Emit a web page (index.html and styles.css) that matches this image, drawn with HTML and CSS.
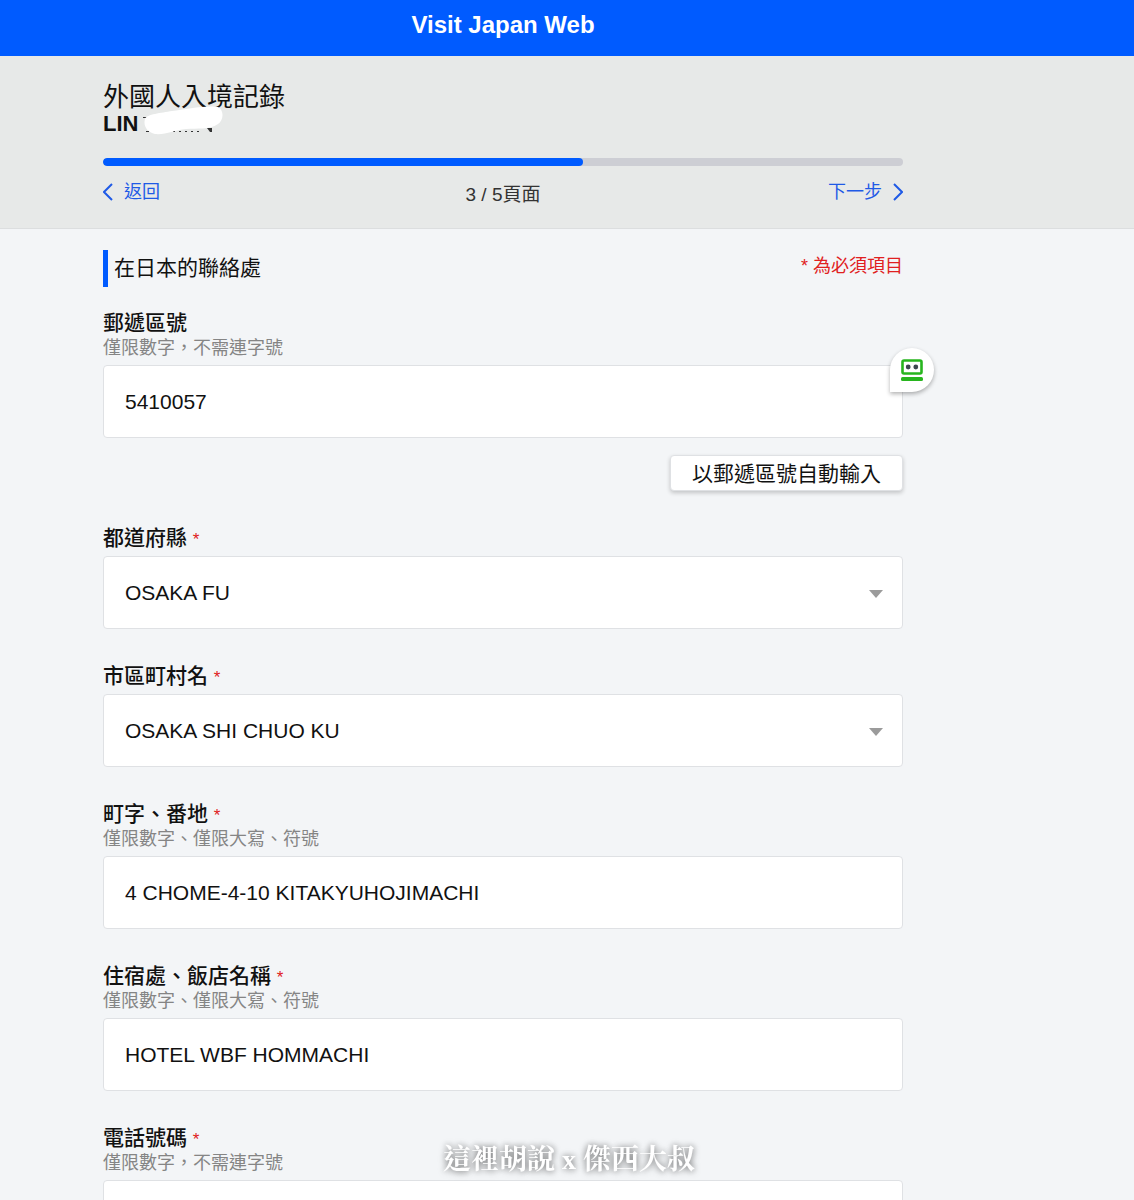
FILE: index.html
```html
<!DOCTYPE html>
<html lang="zh-Hant">
<head>
    <meta charset="UTF-8">
    <meta name="viewport" content="width=device-width, initial-scale=1.0">
    <title>Visit Japan Web</title>
    <link rel="stylesheet" href="styles.css">
</head>
<body>
    <!-- Header -->
    <header class="header">
        <div class="brand">Visit Japan Web</div>
    </header>

    <!-- Progress -->
    <section class="steps">
        <div class="container">
            <h1>外國人入境記錄</h1>
            <div class="person">
                <span>LIN</span>
                <svg class="name-mask" width="80" height="30" viewBox="0 0 80 30" aria-hidden="true">
                    <path fill="#333" d="M0 11h4v1H0zM3 25h3v1H3zM30 25h2v1h-2zM36 25h2v1h-2zM42 25h2v1h-2zM48 25h2v1h-2zM54 25h2v1h-2zM64 22h5v4h-2z"/>
                    <path fill="#fff" d="M2 13C4 8 18 7 29 5C42 3 65 -1 75 1C82 5 80 15 75 18C66 24 55 22 43 23C31 24 23 29 12 28C4 26 0 20 2 13Z"/>
                </svg>
            </div>
            <div class="progress" role="progressbar" aria-valuenow="3" aria-valuemin="0" aria-valuemax="5">
                <div class="progress-bar" style="width: 60%"></div>
            </div>
            <nav class="pager">
                <a href="#" class="prev">
                    <svg width="10" height="18" viewBox="0 0 10 18" aria-hidden="true"><path d="M9 1L1 9l8 8"/></svg>
                    返回
                </a>
                <span class="page-count">3 / 5頁面</span>
                <a href="#" class="next">
                    下一步
                    <svg width="10" height="18" viewBox="0 0 10 18" aria-hidden="true"><path d="M1 1l8 8-8 8"/></svg>
                </a>
            </nav>
        </div>
    </section>

    <!-- Main Content -->
    <main class="main-content">
        <form class="container">
            <div class="section-head">
                <h2>在日本的聯絡處</h2>
                <span class="required-note">* 為必須項目</span>
            </div>

            <div class="field">
                <label for="postal">郵遞區號</label>
                <div class="hint">僅限數字，不需連字號</div>
                <div class="control">
                    <input type="text" id="postal" value="5410057">
                    <button type="button" class="autofill" aria-label="RoboForm">
                        <svg width="22" height="22" viewBox="0 0 22 22" aria-hidden="true">
                            <rect x="1.5" y="1.5" width="19" height="13" rx="1.5" fill="#fff" stroke="#27b51e" stroke-width="2.6"/>
                            <circle cx="7.2" cy="8" r="2.4" fill="#3d4650"/>
                            <circle cx="14.8" cy="8" r="2.4" fill="#3d4650"/>
                            <rect x="0" y="18" width="22" height="4" rx="1.5" fill="#27b51e"/>
                        </svg>
                    </button>
                </div>
                <button type="button" class="lookup">以郵遞區號自動輸入</button>
            </div>

            <div class="field">
                <label for="prefecture">都道府縣 <span class="star">*</span></label>
                <div class="control">
                    <select id="prefecture">
                        <option>OSAKA FU</option>
                    </select>
                    <span class="caret"></span>
                </div>
            </div>

            <div class="field">
                <label for="city">市區町村名 <span class="star">*</span></label>
                <div class="control">
                    <select id="city">
                        <option>OSAKA SHI CHUO KU</option>
                    </select>
                    <span class="caret"></span>
                </div>
            </div>

            <div class="field">
                <label for="street">町字、番地 <span class="star">*</span></label>
                <div class="hint">僅限數字、僅限大寫、符號</div>
                <div class="control">
                    <input type="text" id="street" value="4 CHOME-4-10 KITAKYUHOJIMACHI">
                </div>
            </div>

            <div class="field">
                <label for="hotel">住宿處、飯店名稱 <span class="star">*</span></label>
                <div class="hint">僅限數字、僅限大寫、符號</div>
                <div class="control">
                    <input type="text" id="hotel" value="HOTEL WBF HOMMACHI">
                </div>
            </div>

            <div class="field">
                <label for="phone">電話號碼 <span class="star">*</span></label>
                <div class="hint">僅限數字，不需連字號</div>
                <div class="control">
                    <input type="tel" id="phone">
                </div>
            </div>
        </form>
    </main>

    <div class="watermark">這裡胡說 x 傑西大叔</div>
</body>
</html>
```
FILE: styles.css
```css
:root {
    --blue: #005bff;
    --link: #1f5ae6;
    --red: #e02020;
    --bg: #f3f5f7;
    --bg-steps: #e7e9e8;
    --border: #dfe1e4;
    --text: #111;
    --text-hint: #858585;
    --side: 128px;
}

* {
    margin: 0;
    padding: 0;
    box-sizing: border-box;
}

body {
    display: flex;
    flex-direction: column;
    height: 100vh;
    background: var(--bg);
    color: var(--text);
    font-family: "Liberation Sans", "Noto Sans CJK TC", sans-serif;
    font-size: 21px;
}

input,
select,
button {
    font: inherit;
    color: inherit;
}

.header {
    flex: none;
    height: 56px;
    padding: 9px var(--side) 15px 0;
    background: var(--blue);
    color: #fff;
    text-align: center;
}

.brand {
    font-size: 24px;
    line-height: 32px;
    font-weight: bold;
}

.container {
    width: 100%;
    max-width: 800px;
    margin: 0 auto;
}

/* Progress */
.steps {
    flex: none;
    padding: 26px var(--side) 20px 0;
    background: var(--bg-steps);
    border-bottom: 1px solid #dcdedf;
}

.steps h1 {
    font-size: 26px;
    line-height: 30px;
    font-weight: normal;
}

.person {
    position: relative;
    font-size: 22px;
    line-height: 24px;
    font-weight: bold;
}

.name-mask {
    position: absolute;
    left: 40px;
    bottom: 0;
}

.progress {
    height: 8px;
    margin-top: 22px;
    border-radius: 4px;
    background: #cdced4;
    overflow: hidden;
}

.progress-bar {
    height: 100%;
    border-radius: 4px;
    background: var(--blue);
}

.pager {
    display: grid;
    grid-template-columns: 1fr auto 1fr;
    align-items: start;
    margin-top: 13px;
    font-size: 18px;
    line-height: 26px;
}

.pager a {
    display: flex;
    align-items: center;
    gap: 11px;
    color: var(--link);
    text-decoration: none;
}

.pager svg {
    fill: none;
    stroke: currentColor;
    stroke-width: 2;
}

.pager .next {
    justify-self: end;
}

.page-count {
    padding-top: 3px;
    font-size: 19px;
    color: #333;
}

/* Form */
.main-content {
    flex: 1;
    min-height: 0;
    padding: 21px var(--side) 0 0;
    overflow-y: auto;
    scrollbar-width: none;
}

.section-head {
    display: flex;
    justify-content: space-between;
    margin-bottom: 22px;
}

.section-head h2 {
    padding-left: 6px;
    border-left: 5px solid var(--blue);
    font-size: 21px;
    line-height: 36px;
    height: 37px;
    font-weight: normal;
}

.required-note {
    font-size: 18px;
    line-height: 33px;
    color: var(--red);
}

.field {
    margin-bottom: 33px;
}

.field label {
    display: block;
    height: 26px;
    line-height: 27px;
    font-weight: 500;
}

.star {
    font-size: 17px;
    line-height: 1;
    color: var(--red);
}

.hint {
    height: 24px;
    font-size: 18px;
    line-height: 27px;
    color: var(--text-hint);
}

.control {
    position: relative;
    margin-top: 6px;
}

.control input,
.control select {
    display: block;
    width: 100%;
    height: 73px;
    padding: 0 21px;
    border: 1px solid var(--border);
    border-radius: 4px;
    background: #fff;
    appearance: none;
}

.caret {
    position: absolute;
    top: 34px;
    right: 20px;
    border: 7px solid transparent;
    border-top: 8px solid #9b9b9b;
    border-bottom: 0;
    pointer-events: none;
}

.autofill {
    position: absolute;
    top: -17px;
    right: -31px;
    display: grid;
    place-items: center;
    width: 44px;
    height: 44px;
    border: 0;
    border-radius: 22px 22px 22px 0;
    background: #fff;
    box-shadow: 0 2px 4px rgba(0, 0, 0, 0.3);
}

.lookup {
    display: block;
    height: 36px;
    margin: 17px 0 0 auto;
    padding: 1px 21px 0;
    border: 1px solid var(--border);
    border-radius: 4px;
    background: #fff;
    line-height: 34px;
    box-shadow: 0 2px 4px rgba(0, 0, 0, 0.2);
}

.watermark {
    position: fixed;
    right: 0;
    bottom: 20px;
    left: 4px;
    color: #fff;
    font-family: "Liberation Serif", "Noto Serif CJK TC", "Noto Sans CJK TC", serif;
    font-size: 28px;
    line-height: 40px;
    font-weight: bold;
    text-align: center;
    text-shadow: 0 0 6px rgba(0, 0, 0, 0.4), 0 1px 8px rgba(0, 0, 0, 0.3);
    pointer-events: none;
}
```
